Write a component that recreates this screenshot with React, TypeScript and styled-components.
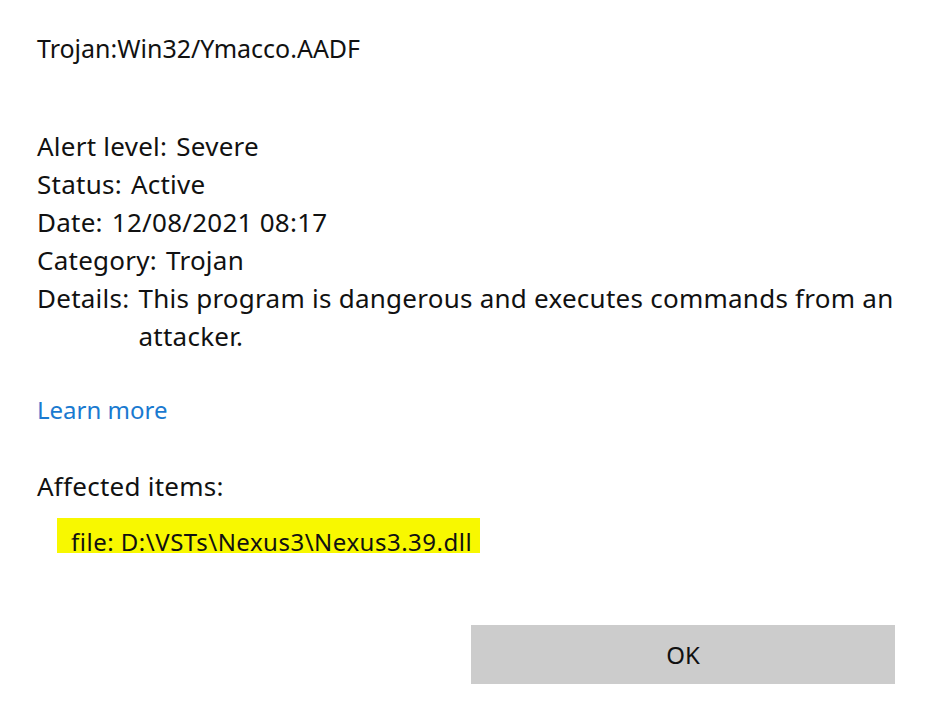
import React from "react";
import styled, { createGlobalStyle } from "styled-components";

const Global = createGlobalStyle`
  html, body { margin: 0; padding: 0; background: #ffffff; }
  body { font-family: "Noto Sans", "Open Sans", sans-serif; color: #111111; }
`;

const Dialog = styled.div`
  width: 940px;
  height: 713px;
  box-sizing: border-box;
  padding: 28px 45px 0 37px;
  display: flex;
  flex-direction: column;
`;

const Title = styled.div`
  font-size: 25px;
  line-height: 40px;
`;

const InfoList = styled.div`
  margin-top: 59px;
  display: flex;
  flex-direction: column;
`;

const InfoRow = styled.div`
  display: flex;
  font-size: 26px;
  line-height: 38px;
  letter-spacing: 0.25px;
`;

const Label = styled.span`
  flex: none;
  margin-right: 9px;
`;

const Value = styled.span`
  flex: 1;
`;

const Link = styled.a`
  margin-top: 36px;
  font-size: 24px;
  line-height: 38px;
  color: #1a7ad0;
  text-decoration: none;
  align-self: flex-start;
`;

const Section = styled.div`
  margin-top: 38px;
  font-size: 26px;
  line-height: 38px;
  letter-spacing: 0.25px;
`;

const Highlight = styled.div`
  align-self: flex-start;
  margin: 13px 0 0 20px;
  background: #f8f800;
  height: 35px;
  width: 423px;
  box-sizing: border-box;
  padding: 9px 0 0 14px;
  font-size: 24px;
  line-height: 30px;
  letter-spacing: 0.5px;
`;

const Actions = styled.div`
  margin-top: 72px;
  display: flex;
  justify-content: flex-end;
`;

const OkButton = styled.button`
  width: 424px;
  height: 59px;
  border: none;
  background: #cccccc;
  font-family: "Noto Sans", "Open Sans", sans-serif;
  font-size: 24px;
  color: #111111;
  padding: 0;
`;

const info: [string, string][] = [
  ["Alert level:", "Severe"],
  ["Status:", "Active"],
  ["Date:", "12/08/2021 08:17"],
  ["Category:", "Trojan"],
  ["Details:", "This program is dangerous and executes commands from an attacker."],
];

export default function App() {
  return (
    <>
      <Global />
      <Dialog>
        <Title>Trojan:Win32/Ymacco.AADF</Title>
        <InfoList>
          {info.map(([k, v]) => (
            <InfoRow key={k}>
              <Label>{k}</Label>
              <Value>{v}</Value>
            </InfoRow>
          ))}
        </InfoList>
        <Link href="#">Learn more</Link>
        <Section>Affected items:</Section>
        <Highlight>file: D:\VSTs\Nexus3\Nexus3.39.dll</Highlight>
        <Actions>
          <OkButton>OK</OkButton>
        </Actions>
      </Dialog>
    </>
  );
}
